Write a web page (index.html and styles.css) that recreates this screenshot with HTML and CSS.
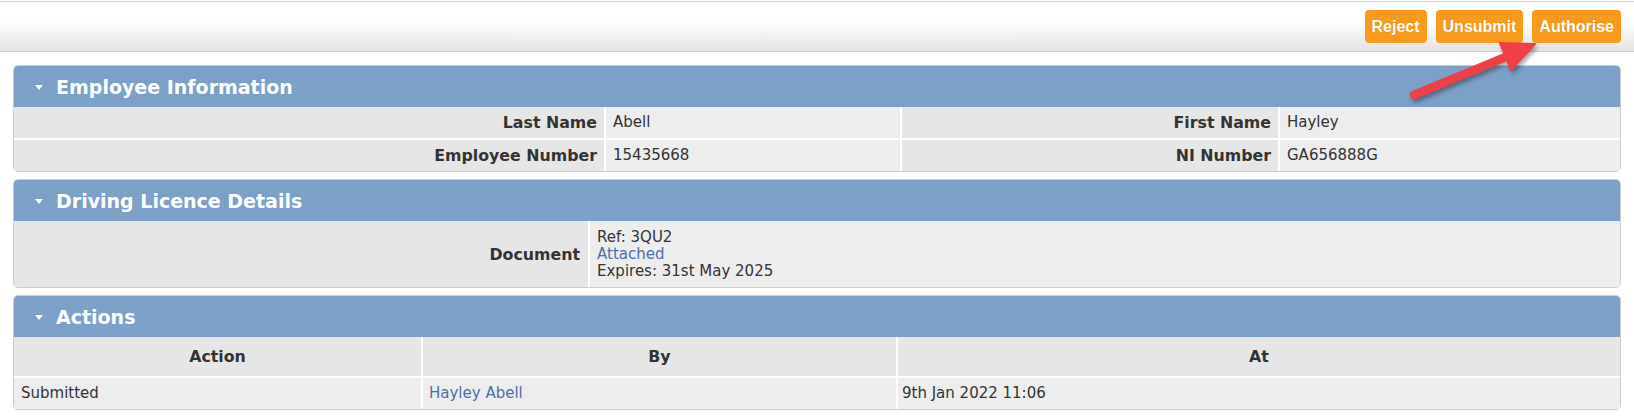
FILE: index.html
```html
<!DOCTYPE html>
<html lang="en">
<head>
<meta charset="utf-8">
<title>Driving Licence</title>
<link rel="stylesheet" href="styles.css">
</head>
<body>
<div class="topbar">
  <button class="btn">Reject</button>
  <button class="btn">Unsubmit</button>
  <button class="btn">Authorise</button>
</div>

<svg class="arrow" width="150" height="80" viewBox="0 0 150 80" aria-hidden="true">
  <line x1="14" y1="65" x2="108" y2="26" stroke="#ef3f47" stroke-width="8.5" stroke-linecap="round"/>
  <polygon points="135,14 111,40 100,13" fill="#ef3f47" stroke="#ef3f47" stroke-width="2" stroke-linejoin="round"/>
</svg>

<main class="content">
  <section class="panel">
    <h2 class="panel-head"><span class="caret"></span>Employee Information</h2>
    <div class="grid grid-emp">
      <div class="label">Last Name</div>
      <div class="value">Abell</div>
      <div class="label">First Name</div>
      <div class="value">Hayley</div>
      <div class="label">Employee Number</div>
      <div class="value">15435668</div>
      <div class="label">NI Number</div>
      <div class="value">GA656888G</div>
    </div>
  </section>

  <section class="panel">
    <h2 class="panel-head"><span class="caret"></span>Driving Licence Details</h2>
    <div class="grid grid-doc">
      <div class="label label-mid">Document</div>
      <div class="value value-doc">Ref: 3QU2<br><a href="#">Attached</a><br>Expires: 31st May 2025</div>
    </div>
  </section>

  <section class="panel">
    <h2 class="panel-head"><span class="caret"></span>Actions</h2>
    <div class="grid grid-act">
      <div class="th">Action</div>
      <div class="th">By</div>
      <div class="th">At</div>
      <div class="value">Submitted</div>
      <div class="value value-by"><a href="#">Hayley Abell</a></div>
      <div class="value value-at">9th Jan 2022 11:06</div>
    </div>
  </section>
</main>
</body>
</html>
```

FILE: styles.css
```css
html, body {
  margin: 0;
  padding: 0;
  background: #ffffff;
}

body {
  font-family: "DejaVu Sans", Verdana, sans-serif;
  font-size: 15px;
  color: #333333;
  position: relative;
}

.topbar {
  margin-top: 1px;
  height: 41px;
  border-top: 1px solid #d2d2d2;
  border-bottom: 1px solid #cfcfcf;
  background: linear-gradient(to bottom, #ffffff 0%, #ffffff 38%, #e4e4e4 100%);
  display: flex;
  justify-content: flex-end;
  align-items: flex-start;
  gap: 9px;
  padding: 8px 13px 0 0;
  box-sizing: content-box;
}

.btn {
  font-family: "Liberation Sans", Arial, sans-serif;
  font-weight: bold;
  font-size: 16px;
  color: #ffffff;
  background: #f89a1c;
  border: none;
  border-radius: 4px;
  height: 33px;
  padding: 0 7px;
  line-height: 33px;
  text-shadow: 0 0 1px rgba(150, 80, 0, 0.35);
  cursor: pointer;
}

.arrow {
  position: absolute;
  left: 1400px;
  top: 30px;
  filter: drop-shadow(2px 3px 2px rgba(0, 0, 0, 0.35));
  z-index: 5;
}

.content {
  padding: 13px 13px 0 13px;
  display: flex;
  flex-direction: column;
  gap: 7px;
}

.panel {
  border: 1px solid #cccccc;
  border-radius: 5px;
  overflow: hidden;
  background: #ffffff;
}

.panel-head {
  margin: 0;
  height: 41px;
  background: #7ca0c8;
  color: #ffffff;
  font-size: 19px;
  font-weight: bold;
  display: flex;
  align-items: center;
  padding-left: 21px;
}

.caret {
  display: inline-block;
  width: 0;
  height: 0;
  border-left: 4.5px solid transparent;
  border-right: 4.5px solid transparent;
  border-top: 5px solid #ffffff;
  margin-right: 13px;
  margin-top: 1px;
}

.grid {
  display: grid;
  gap: 2px;
  background: #ffffff;
}

.grid-emp {
  grid-template-columns: 590px 294px 376px 1fr;
  grid-auto-rows: 31px;
}

.grid-doc {
  grid-template-columns: 574px 1fr;
}

.grid-act {
  grid-template-columns: 407px 473px 1fr;
}

.label {
  background: #e6e6e6;
  font-weight: bold;
  font-size: 15.8px;
  text-align: right;
  padding: 0 7px;
  display: flex;
  align-items: center;
  justify-content: flex-end;
}

.label-mid {
  padding-right: 8px;
}

.value {
  background: #ededed;
  padding: 0 7px;
  display: flex;
  align-items: center;
  line-height: 17px;
  height: 31px;
}

.value-doc {
  display: block;
  height: auto;
  padding: 8px 7px 7px 7px;
}

.value-by {
  padding-left: 6px;
}

.value-at {
  padding-left: 4px;
}

.th {
  background: #e6e6e6;
  font-weight: bold;
  font-size: 15.8px;
  text-align: center;
  height: 39px;
  display: flex;
  align-items: center;
  justify-content: center;
}

a {
  color: #4b6fa6;
  text-decoration: none;
}
```
